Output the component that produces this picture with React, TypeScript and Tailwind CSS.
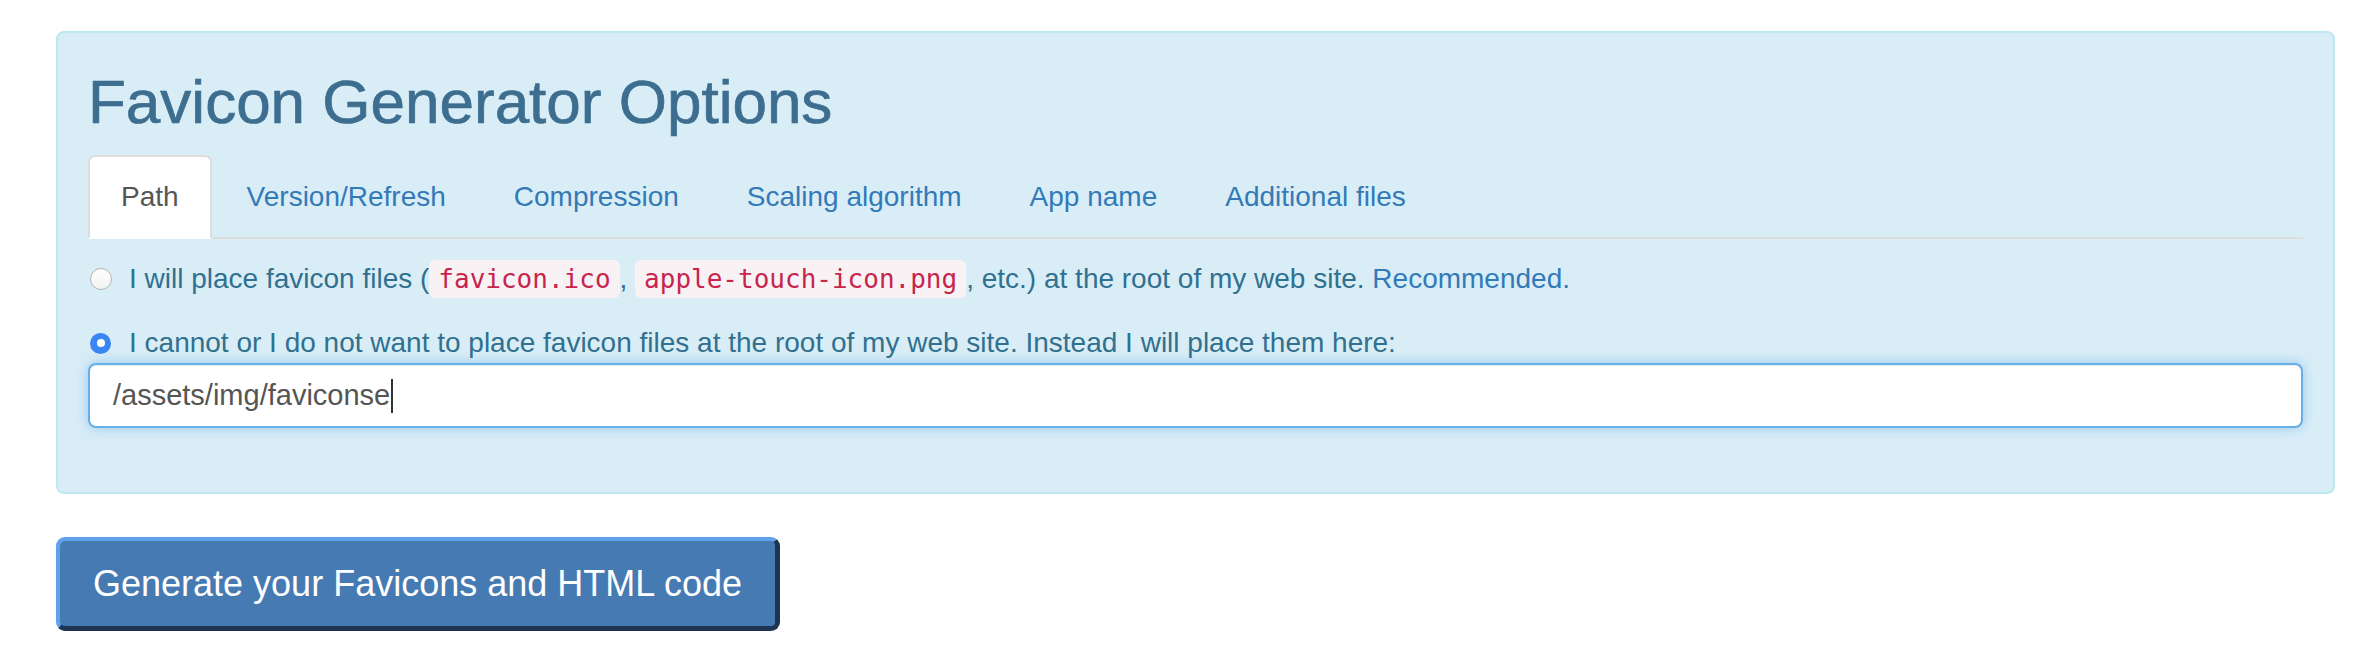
const tabs = [
  "Path",
  "Version/Refresh",
  "Compression",
  "Scaling algorithm",
  "App name",
  "Additional files",
];

function Radio({ checked }: { checked: boolean }) {
  if (checked) {
    return (
      <span className="ml-[2px] flex h-[21px] w-[21px] shrink-0 items-center justify-center rounded-full bg-[#3b86f5]">
        <span className="h-[8px] w-[8px] rounded-full bg-white" />
      </span>
    );
  }
  return (
    <span className="ml-[2px] h-[22px] w-[22px] shrink-0 rounded-full border border-[#b5b5b5] bg-gradient-to-b from-white to-[#f2f2f2]" />
  );
}

function Code({ children }: { children: string }) {
  return (
    <code className="rounded-[6px] bg-[#f9f2f4] px-[9px] py-[4px] font-['DejaVu_Sans_Mono',monospace] text-[26px] text-[#c7254e]">
      {children}
    </code>
  );
}

export default function App() {
  return (
    <div className="min-h-screen bg-white pl-[56px] pr-[39px] pt-[31px] font-['Liberation_Sans',Arial,sans-serif]">
      <div className="rounded-[8px] border-2 border-[#bce8f1] bg-[#d9edf7] px-[30px] pb-[64px] pt-[35px] text-[28px] text-[#31708f]">
        <h1 className="text-[62px] font-medium leading-[67px] text-[#3d6e8f] [-webkit-text-stroke:0.7px_#3d6e8f]">
          Favicon Generator Options
        </h1>

        <ul className="mt-[20px] flex h-[84px] border-b-2 border-[#ddd]">
          {tabs.map((tab, i) => (
            <li key={tab} className="-mb-[2px] mr-[2px]">
              <a
                className={
                  i === 0
                    ? "flex h-[84px] items-center rounded-t-[7px] border-2 border-[#ddd] border-b-transparent bg-white px-[31px] text-[#555]"
                    : "flex h-[84px] items-center border-2 border-transparent px-[31px] text-[#337ab7]"
                }
              >
                {tab}
              </a>
            </li>
          ))}
        </ul>

        <label className="mt-[21px] flex h-[38px] items-center">
          <Radio checked={false} />
          <span className="ml-[17px] whitespace-nowrap">
            I will place favicon files (<Code>favicon.ico</Code>,{" "}
            <Code>apple-touch-icon.png</Code>, etc.) at the root of my web
            site. <a className="text-[#337ab7]">Recommended.</a>
          </span>
        </label>

        <label className="mt-[26px] flex h-[38px] items-center">
          <Radio checked />
          <span className="ml-[18px] whitespace-nowrap">
            I cannot or I do not want to place favicon files at the root of my
            web site. Instead I will place them here:
          </span>
        </label>

        <div className="mt-[1px] flex h-[65px] items-center rounded-[8px] border-2 border-[#66afe9] bg-white pl-[23px] text-[29px] text-[#555] shadow-[inset_0_1px_1px_rgba(0,0,0,0.075),0_0_12px_rgba(102,175,233,0.6)]">
          /assets/img/faviconse
          <span className="ml-[1px] h-[34px] w-[2px] bg-[#333]" />
        </div>
      </div>

      <div className="mt-[43px]">
        <button className="h-[94px] rounded-[9px] border-b-[5px] border-l-4 border-r-[5px] border-t-4 border-b-[#1d3550] border-l-[#5fa2ea] border-r-[#1d3550] border-t-[#5fa2ea] bg-[#467ab3] px-[33px] text-[36px] text-white">
          Generate your Favicons and HTML code
        </button>
      </div>
    </div>
  );
}
